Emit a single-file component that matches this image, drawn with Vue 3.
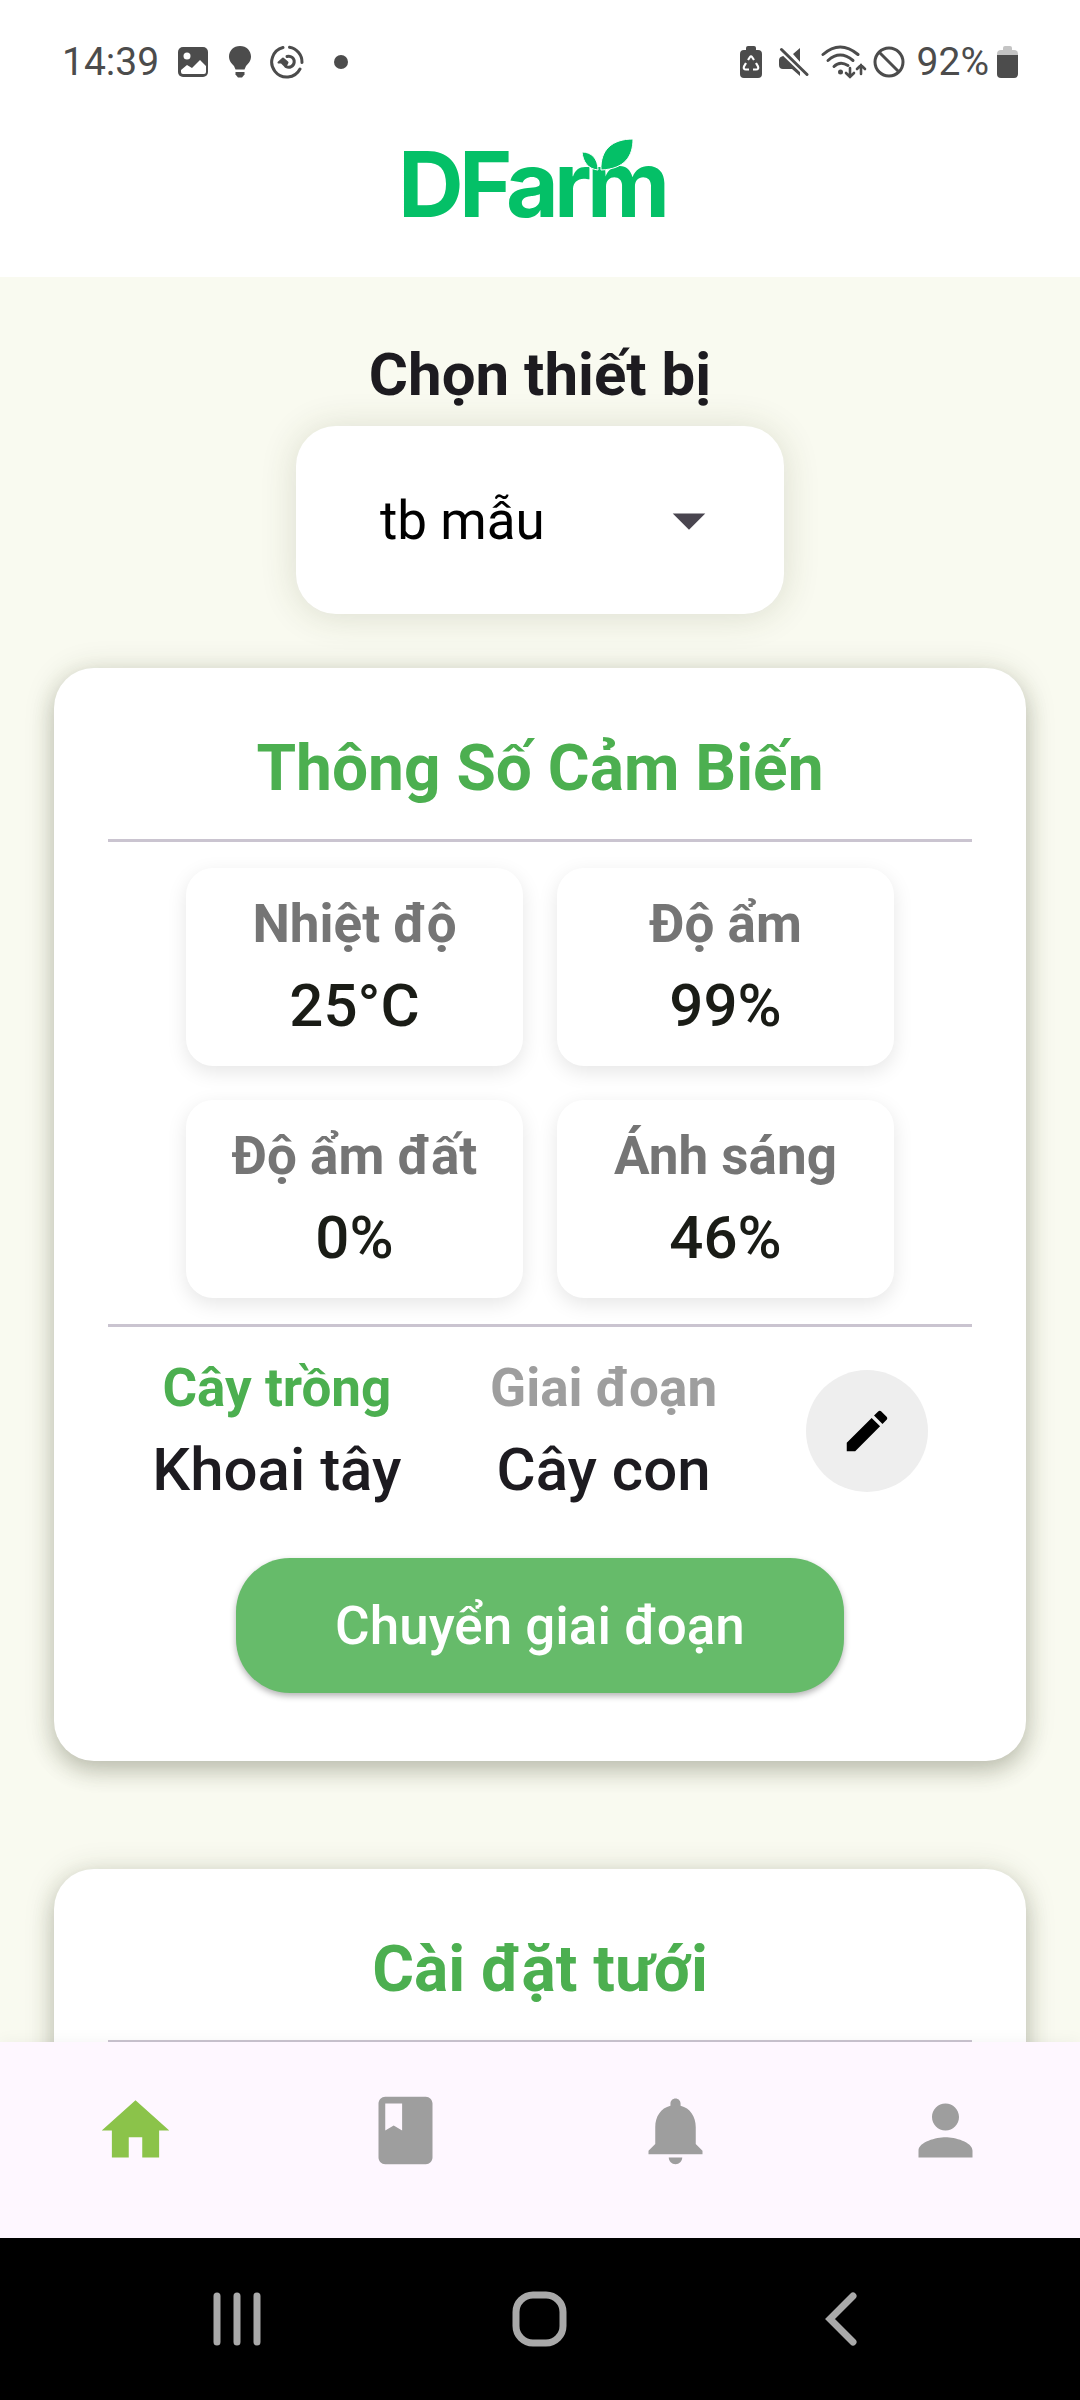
<script setup>
import { ref } from 'vue'

const devices = ['tb mẫu']
const device = ref(devices[0])

const sensors = [
  { label: 'Nhiệt độ', value: '25°C' },
  { label: 'Độ ẩm', value: '99%' },
  { label: 'Độ ẩm đất', value: '0%' },
  { label: 'Ánh sáng', value: '46%' },
]

const tabs = [
  { name: 'Trang chủ', active: true, path: 'M10 20v-6h4v6h5v-8h3L12 3 2 12h3v8z' },
  { name: 'Nhật ký', active: false, path: 'M18 2H6c-1.1 0-2 .9-2 2v16c0 1.1.9 2 2 2h12c1.1 0 2-.9 2-2V4c0-1.1-.9-2-2-2zM6 4h5v8l-2.500-1.500L6 12V4z' },
  { name: 'Thông báo', active: false, path: 'M12 22c1.100 0 2-.9 2-2h-4c0 1.100.89 2 2 2zm6-6v-5c0-3.070-1.640-5.640-4.500-6.320V4c0-.83-.67-1.500-1.500-1.500s-1.500.67-1.500 1.500v.68C7.630 5.360 6 7.920 6 11v5l-2 2v1h16v-1l-2-2z' },
  { name: 'Tài khoản', active: false, path: 'M12 12c2.210 0 4-1.790 4-4s-1.790-4-4-4-4 1.790-4 4 1.790 4 4 4zm0 2c-2.670 0-8 1.340-8 4v2h16v-2c0-2.660-5.330-4-8-4z' },
]
</script>

<template>
  <div class="screen">
    <header class="top">
      <div class="status">
        <div class="status-left">
          <span class="clock">14:39</span>
          <svg class="s-picture" width="32" height="32" viewBox="0 0 32 32">
            <rect x="1" y="1" width="30" height="30" rx="5" fill="#4c4c4c" />
            <circle cx="10" cy="10" r="3.500" fill="#fff" />
            <path d="M4 24l6-5 5 3 8-8 6 6v6q0 2-2 2H6q-2 0-2-2z" fill="#fff" />
          </svg>
          <svg class="s-bulb" width="24" height="34" viewBox="0 0 24 34" fill="#4c4c4c">
            <path d="M12 1C5.500 1 1 5.800 1 11.500c0 4.500 2.500 7 5 9.500l1.500 3.500h9L18 21c2.500-2.500 5-5 5-9.500C23 5.800 18.500 1 12 1z" />
            <path d="M7.500 27h9v2.500L14 32.500h-4L7.500 29.500z" />
          </svg>
          <svg class="s-sync" width="34" height="34" viewBox="0 0 34 34" fill="none" stroke="#4c4c4c" stroke-width="3" stroke-linecap="round">
            <path d="M19.500 2.300A15 15 0 0 1 32 17.500" />
            <path d="M30 24A15 15 0 1 1 13 2.500" />
            <path d="M17 11.500a5.500 5.500 0 1 1-1 10" />
            <path d="M13 13.500l-4.500 4h3l4 4 2-4-1-1z" fill="#4c4c4c" stroke-width="2" stroke-linejoin="round" />
          </svg>
          <span class="dot"></span>
        </div>
        <div class="status-right">
          <svg class="s-saver" width="22" height="32" viewBox="0 0 22 32">
            <path d="M6 4V2q0-2 2-2h6q2 0 2 2v2h2q4 0 4 4v20q0 4-4 4H4q-4 0-4-4V8q0-4 4-4z" fill="#4c4c4c" />
            <g fill="none" stroke="#fff" stroke-width="2.200">
              <path d="M8 14l2-3q1-1.500 2 0l2 3" />
              <path d="M16 17l2 3.500q1 3-2 3h-3" />
              <path d="M6 17l-2 3.500q-1 3 2 3h3" />
            </g>
          </svg>
          <svg class="s-mute" width="30" height="32" viewBox="0 0 30 32" fill="#4c4c4c">
            <path d="M21 2v14l-7-8zM8 10l13 13v7l-8-7H4q-4 0-4-4v-5q0-3 4-4z" />
            <path d="M2.500 3.500l26 25" stroke="#fff" stroke-width="7" />
            <path d="M2.500 3.500l25.500 25" stroke="#4c4c4c" stroke-width="3" stroke-linecap="round" />
          </svg>
          <svg class="s-wifi" width="46" height="34" viewBox="0 0 46 34" fill="none" stroke="#4c4c4c" stroke-width="3" stroke-linecap="round">
            <path d="M2 9.500q17-15 35 0" />
            <path d="M7 15.500q12-11 25 0" />
            <path d="M13 21.500q6-6 14-1" />
            <circle cx="19.500" cy="27" r="2.500" fill="#4c4c4c" stroke="none" />
            <path d="M29 23v9m-4-4l4 4 4-4M40 29v-9m-4 4l4-4 4 4" stroke-width="2.600" />
          </svg>
          <svg class="s-ban" width="32" height="32" viewBox="0 0 32 32" fill="none" stroke="#4c4c4c" stroke-width="3">
            <circle cx="16" cy="16" r="14" />
            <path d="M6 6l20 20" />
          </svg>
          <span class="charge">92%</span>
          <svg class="s-battery" width="21" height="32" viewBox="0 0 21 32">
            <path d="M6 4V2q0-2 2-2h5q2 0 2 2v2h2q4 0 4 4v2H0V8q0-4 4-4z" fill="#c4c4c4" />
            <path d="M0 9h21v19q0 4-4 4H4q-4 0-4-4z" fill="#4c4c4c" />
          </svg>
        </div>
      </div>
      <svg class="logo" width="290" height="120" viewBox="0 0 290 120" role="img" aria-label="DFarm">
        <text class="logo-letters" x="3 64 111 159 192" y="93">DFarm</text>
        <g class="leaves">
          <path d="M206 46C205 26 217 15 238 15C238 32 230 45 206 46z" />
          <path d="M203 46C203 34 196 28 187 28C188 38 193 45 203 46z" />
        </g>
      </svg>
    </header>

    <main class="content">
      <label class="picker-label" for="device">Chọn thiết bị</label>
      <div class="picker">
        <select id="device" v-model="device">
          <option v-for="d in devices" :key="d" :value="d">{{ d }}</option>
        </select>
        <svg class="caret" width="78" height="78" viewBox="0 0 24 24" fill="#49454f"><path d="M7 10l5 5 5-5z" /></svg>
      </div>

      <section class="card">
        <h2>Thông Số Cảm Biến</h2>
        <hr />
        <div class="sensors">
          <div v-for="s in sensors" :key="s.label" class="sensor">
            <span class="label">{{ s.label }}</span>
            <span class="value">{{ s.value }}</span>
          </div>
        </div>
        <hr />
        <div class="crop">
          <div class="pair">
            <span class="label green">Cây trồng</span>
            <span class="value ink">Khoai tây</span>
          </div>
          <div class="pair">
            <span class="label pale">Giai đoạn</span>
            <span class="value ink">Cây con</span>
          </div>
          <button class="edit" type="button" aria-label="Chỉnh sửa">
            <svg width="54" height="54" viewBox="0 0 24 24"><path d="M3 17.250V21h3.750L17.810 9.940l-3.750-3.750L3 17.250zM20.710 7.040c.39-.39.39-1.020 0-1.410l-2.340-2.340c-.39-.39-1.020-.39-1.410 0l-1.830 1.830 3.750 3.750 1.830-1.830z" /></svg>
          </button>
        </div>
        <button class="next" type="button">Chuyển giai đoạn</button>
      </section>

      <section class="card">
        <h2>Cài đặt tưới</h2>
        <hr />
      </section>
    </main>

    <nav class="tabs">
      <a v-for="t in tabs" :key="t.name" href="#" :aria-label="t.name" :class="{ active: t.active }">
        <svg width="81" height="81" viewBox="0 0 24 24" fill="currentColor"><path :d="t.path" /></svg>
      </a>
    </nav>

    <div class="system">
      <button type="button" aria-label="Gần đây">
        <svg width="56" height="56" viewBox="0 0 56 56"><path d="M8 5v46M28 5v46M48 5v46" /></svg>
      </button>
      <button type="button" aria-label="Màn hình chính">
        <svg width="56" height="56" viewBox="0 0 56 56"><rect x="4" y="4" width="47" height="48" rx="17" /></svg>
      </button>
      <button type="button" aria-label="Quay lại">
        <svg width="56" height="56" viewBox="0 0 56 56"><path d="M38 5L15 28l23 23" /></svg>
      </button>
    </div>
  </div>
</template>

<style>
body {
  background: #000;
}
</style>

<style scoped>
.screen {
  display: flex;
  flex-direction: column;
  height: 100vh;
  background: #f9faf0;
  color: #1d1b20;
  font-family: Roboto, "Noto Sans", sans-serif;
}

button,
select {
  border: 0;
  padding: 0;
  font-family: inherit;
}

svg {
  display: block;
  flex: none;
}

.top {
  display: flex;
  flex-direction: column;
  align-items: center;
  padding-bottom: 33px;
  background: #fff;
}

.status {
  display: flex;
  align-items: center;
  justify-content: space-between;
  align-self: stretch;
  height: 124px;
  padding: 0 62px;
  box-sizing: border-box;
  color: #4c4c4c;
  font-size: 39px;
  line-height: 46px;
}

.status-left,
.status-right {
  display: flex;
  align-items: center;
}

.s-picture {
  margin-left: 18px;
}

.s-bulb {
  margin-left: 19px;
}

.s-sync {
  margin-left: 18px;
}

.dot {
  width: 14px;
  height: 14px;
  margin-left: 30px;
  border-radius: 50%;
  background: #4c4c4c;
}

.s-mute {
  margin-left: 17px;
}

.s-wifi {
  margin-left: 12px;
}

.s-ban {
  margin-left: 6px;
}

.charge {
  margin-left: 12px;
}

.s-battery {
  margin-left: 8px;
}

.logo-letters {
  fill: #04c067;
  font-family: Inter, sans-serif;
  font-size: 91px;
  font-weight: 700;
}

.leaves {
  fill: #04c067;
  stroke: #fff;
  stroke-width: 1px;
}

.content {
  display: flex;
  flex: 1;
  flex-direction: column;
  align-items: center;
  min-height: 0;
  padding: 63px 54px 0;
  overflow-y: auto;
  scrollbar-width: none;
}

.picker-label {
  flex: none;
  margin-bottom: 16px;
  font-size: 60px;
  font-weight: 700;
  line-height: 70px;
}

.picker {
  display: grid;
  flex: none;
  align-items: center;
  width: 488px;
  margin-bottom: 54px;
  border-radius: 40px;
  background: #fff;
  box-shadow: 0 2px 36px rgba(60, 70, 30, 0.16);
}

.picker select {
  grid-area: 1 / 1;
  width: 100%;
  height: 188px;
  padding: 2px 140px 0 84px;
  border-radius: 40px;
  background: transparent;
  color: #000;
  font-size: 53px;
  line-height: 60px;
  appearance: none;
}

.caret {
  grid-area: 1 / 1;
  justify-self: end;
  margin-right: 56px;
  pointer-events: none;
}

.card {
  display: flex;
  flex: none;
  flex-direction: column;
  align-items: center;
  align-self: stretch;
  margin-bottom: 108px;
  padding: 64px 54px 68px;
  border-radius: 40px;
  background: #fff;
  box-shadow: 0 10px 22px rgba(50, 55, 30, 0.24), 0 2px 32px rgba(50, 55, 30, 0.14);
}

h2 {
  margin: 0 0 33px;
  color: #4caf50;
  font-size: 64px;
  font-weight: 700;
  line-height: 74px;
}

hr {
  align-self: stretch;
  height: 3px;
  margin: 0;
  border: 0;
  background: #cac4d0;
}

.sensors {
  display: grid;
  grid-template-columns: 337px 337px;
  gap: 34px;
  margin: 26px 0;
}

.sensor,
.pair {
  display: flex;
  flex-direction: column;
  align-items: center;
  gap: 18px;
}

.sensor {
  padding: 26px 0;
  border-radius: 27px;
  background: #fff;
  box-shadow: 0 6px 20px rgba(0, 0, 0, 0.1);
}

.label {
  color: #757575;
  font-size: 53px;
  font-weight: 700;
  line-height: 60px;
}

.value {
  color: #1a1c16;
  font-size: 60px;
  font-weight: 500;
  line-height: 68px;
}

.green {
  color: #4caf50;
}

.pale {
  color: #9e9e9e;
}

.ink {
  color: #1d1b20;
}

.crop {
  display: flex;
  align-items: center;
  align-self: stretch;
  justify-content: space-around;
  margin: 31px 0 54px;
}

.edit {
  display: flex;
  align-items: center;
  justify-content: center;
  width: 122px;
  height: 122px;
  border-radius: 50%;
  background: #eee;
}

.next {
  width: 608px;
  height: 135px;
  border-radius: 54px;
  background: #66bb6a;
  box-shadow: 0 3px 6px rgba(0, 0, 0, 0.3);
  color: #fff;
  font-size: 53px;
  font-weight: 500;
  line-height: 60px;
}

.tabs {
  display: grid;
  flex: none;
  grid-template-columns: repeat(4, 1fr);
  justify-items: center;
  padding: 48px 0 67px;
  background: #fef7ff;
  box-shadow: 0 0 16px rgba(0, 0, 0, 0.05);
}

.tabs a {
  color: #9e9e9e;
}

.tabs a.active {
  color: #8bc34a;
}

.system {
  display: flex;
  flex: none;
  justify-content: space-around;
  padding: 53px 86px;
  background: #000;
}

.system button {
  background: none;
}

.system svg {
  fill: none;
  stroke: #a9a9a9;
  stroke-width: 7px;
  stroke-linecap: round;
}
</style>
